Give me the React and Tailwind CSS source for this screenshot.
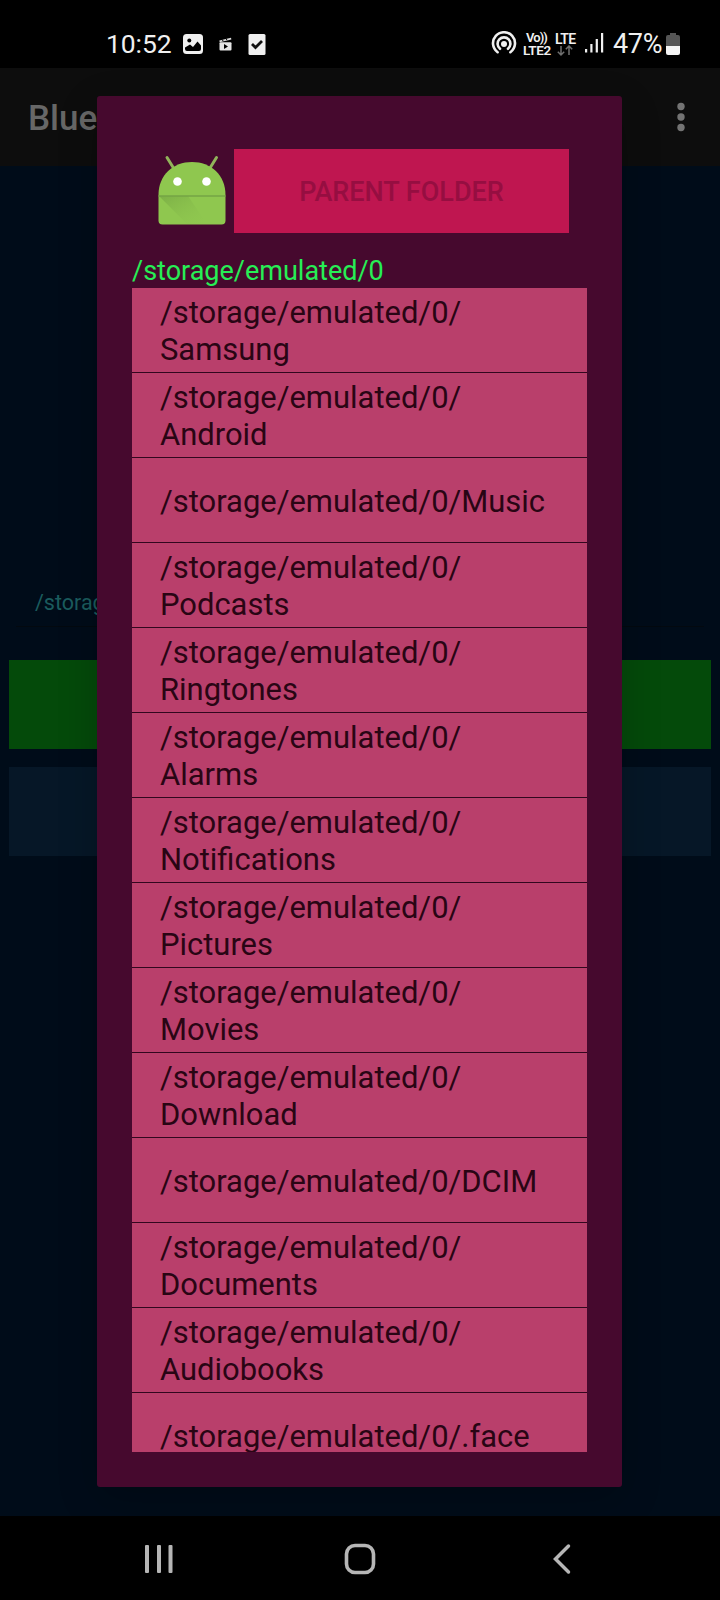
import React from 'react';

const folders = [
  'Samsung', 'Android', 'Music', 'Podcasts', 'Ringtones', 'Alarms', 'Notifications',
  'Pictures', 'Movies', 'Download', 'DCIM', 'Documents', 'Audiobooks', '.face',
];
const shortNames = ['Music', 'DCIM', '.face'];

function StatusBar() {
  return (
    <header className="flex h-[68px] shrink-0 items-start bg-black pt-[28px] text-[#f0f0f0]">
      <span className="ml-[106px] w-[77px] text-[26.5px] leading-[32px] tracking-[-0.1px]">10:52</span>
      <svg className="mt-[6px] h-[20px] w-[20px]" viewBox="0 0 20 20">
        <rect width="20" height="20" rx="3.5" fill="#f0f0f0" />
        <circle cx="6.3" cy="6.5" r="2" fill="#000" />
        <path d="M2 15v-1.500l5-3 3 2.500 4.500-5.500 3.500 4V15q0 2-2 2H4q-2 0-2-2z" fill="#000" />
      </svg>
      <svg className="ml-[16px] mt-[9px] h-[14px] w-[13px]" viewBox="0 0 13 14">
        <path d="M.3 3.600 12 .7l.4 1.700L.7 5.300z" fill="#ddd" />
        <path d="m3.200 2.500 1 1.700M7 1.500l1 1.700" stroke="#000" strokeWidth="1" />
        <rect x=".5" y="5.200" width="12" height="8.300" rx="1" fill="#e5e5e5" />
        <path d="M5 7v5l4-2.500z" fill="#000" />
      </svg>
      <svg className="ml-[16px] mt-[6px] h-[21px] w-[18px]" viewBox="0 0 18 21">
        <rect x=".5" width="17" height="21" rx="1.500" fill="#f0f0f0" />
        <path d="m4 10 3.500 3.500 6.500-6.500" fill="none" stroke="#111" strokeWidth="2.800" />
      </svg>
      <div className="flex-1" />
      <svg className="mt-[3px] h-[24px] w-[26px]" viewBox="0 0 26 24" fill="none" stroke="#f0f0f0" strokeWidth="2.600">
        <circle cx="13" cy="13" r="3" fill="#f0f0f0" stroke="none" />
        <path d="M6.600 21.200a11 11 0 1 1 12.800 0" strokeLinecap="round" />
        <path d="M9 17.800a6.400 6.400 0 1 1 8 0" strokeLinecap="round" />
      </svg>
      <div className="ml-[6px] mt-[4px] w-[32px] font-semibold leading-[12px]">
        <div className="pl-[3px] text-[13px] tracking-[-0.9px]">Vo))</div>
        <div className="text-[13.5px] tracking-[-0.4px]">LTE2</div>
      </div>
      <div className="w-[30px] font-semibold">
        <div className="mt-[5px] text-[14px] leading-[12px] tracking-[-0.6px]">LTE</div>
        <svg className="ml-[2px] h-[12px] w-[16px]" viewBox="0 0 16 12" fill="none" stroke="#707070" strokeWidth="1.500">
          <path d="M4 1v9M.8 6.800 4 10l3.200-3.200M12 10V1M8.800 4.200 12 1l3.200 3.200" />
        </svg>
      </div>
      <svg className="mt-[5px] h-[20px] w-[19px]" viewBox="0 0 19 20" fill="#f0f0f0">
        <rect x="0" y="16" width="2.200" height="3.500" />
        <rect x="5.300" y="11" width="2.200" height="8.500" />
        <rect x="10.700" y="6" width="2.200" height="13.500" />
        <rect x="16" y="0" width="2.200" height="19.500" />
      </svg>
      <span className="ml-[9px] w-[53px] text-[27px] leading-[32px] tracking-[-0.3px]">47%</span>
      <svg className="mr-[40px] mt-[5px] h-[22px] w-[14px]" viewBox="0 0 14 22">
        <path d="M4 0h6v2h2q2 0 2 2v9H0V4q0-2 2-2h2z" fill="#555" />
        <path d="M0 13h14v7q0 2-2 2H2q-2 0-2-2z" fill="#f4f4f4" />
      </svg>
    </header>
  );
}

function AndroidHead() {
  return (
    <svg className="h-[84px] w-[84px]" viewBox="0 0 84 84">
      <defs>
        <linearGradient id="headShade" x1="0" y1="0" x2="1" y2="1">
          <stop offset="0" stopColor="#6f9f40" stopOpacity=".6" />
          <stop offset="1" stopColor="#8fc74f" stopOpacity="0" />
        </linearGradient>
      </defs>
      <g stroke="#91b35a" strokeWidth="3" strokeLinecap="round">
        <path d="m17 8.500 6.500 10.500M66.500 8.500l-6.500 10.500" />
      </g>
      <path d="M8.500 46C8.500 26 23 13 42 13S75.500 26 75.500 46v25.500q0 4-4 4h-59q-4 0-4-4z" fill="#8fc74f" />
      <path d="m9 47 28 28h20L38 47z" fill="url(#headShade)" />
      <path d="M8.500 47h67" stroke="#75a444" strokeWidth="1.500" />
      <circle cx="27.500" cy="32.500" r="4.300" fill="#fff" />
      <circle cx="56.500" cy="32.500" r="4.300" fill="#fff" />
    </svg>
  );
}

function FolderDialog() {
  return (
    <section className="absolute left-[97px] top-[96px] flex h-[1391px] w-[525px] flex-col rounded-[3px] bg-[#46092e] px-[35px] pb-[35px] pt-[53px] shadow-[0_12px_40px_rgba(0,0,0,0.2)]">
      <div className="flex h-[84px] shrink-0 pl-[18px]">
        <AndroidHead />
        <button className="h-[84px] w-[335px] bg-[#bf1650] pt-[2px] text-[27px] font-medium text-[#960e41]">PARENT FOLDER</button>
      </div>
      <div className="mt-[22px] h-[33px] shrink-0 text-[27px] leading-[33px] text-[#27ee55]">/storage/emulated/0</div>
      <ul className="min-h-0 w-[455px] flex-1 overflow-hidden bg-[#b93f6b] text-[#290514]">
        {folders.map((name) => (
          <li key={name} className="flex h-[85px] items-center border-b border-[#32071e] pl-[28px] pt-[2px] text-[30.95px] leading-[37px]">
            <span>/storage/emulated/0/{!shortNames.includes(name) && <br />}{name}</span>
          </li>
        ))}
      </ul>
    </section>
  );
}

export default function App() {
  return (
    <div className="relative flex h-[1600px] w-[720px] flex-col overflow-hidden bg-[#000c19] font-[Roboto,sans-serif]">
      <StatusBar />
      <div className="flex h-[98px] shrink-0 items-center justify-between bg-[#0d0d0d] pl-[28px] pr-[34px]">
        <h1 className="pt-[4px] text-[35px] font-medium text-[#676767]">Blue</h1>
        <svg className="h-[30px] w-[10px]" viewBox="0 0 10 30" fill="#737373">
          <circle cx="5" cy="4.500" r="3.700" /><circle cx="5" cy="15" r="3.700" /><circle cx="5" cy="25.500" r="3.700" />
        </svg>
      </div>
      <main className="flex flex-1 flex-col px-[9px] pt-[419px]">
        <div className="mx-[7px] h-[42px] border-b border-[#03090f] pl-[19px] text-[21.500px] leading-[36px] text-[#1b5c5e]">/storage</div>
        <div className="mt-[33px] h-[89px] bg-[#044a0a]" />
        <div className="mt-[18px] h-[89px] bg-[#061727]" />
      </main>
      <nav className="flex h-[84px] shrink-0 items-center bg-black pt-[2px]">
        <svg className="ml-[145px] h-[30px] w-[28px]" viewBox="0 0 28 30" fill="#b6b6b6">
          <rect x="0" y="1" width="4" height="28" rx="1" /><rect x="12" y="1" width="4" height="28" rx="1" /><rect x="23.500" y="1" width="4" height="28" rx="1" />
        </svg>
        <svg className="ml-[171px] h-[32px] w-[32px]" viewBox="0 0 32 32" fill="none" stroke="#b6b6b6" strokeWidth="3.600">
          <rect x="2.500" y="2.500" width="27" height="27" rx="8.500" />
        </svg>
        <svg className="ml-[176px] h-[32px] w-[20px]" viewBox="0 0 20 32" fill="none" stroke="#b6b6b6" strokeWidth="3.500" strokeLinecap="round">
          <path d="M16.500 3 3.500 16l13 13" />
        </svg>
      </nav>
      <FolderDialog />
    </div>
  );
}
